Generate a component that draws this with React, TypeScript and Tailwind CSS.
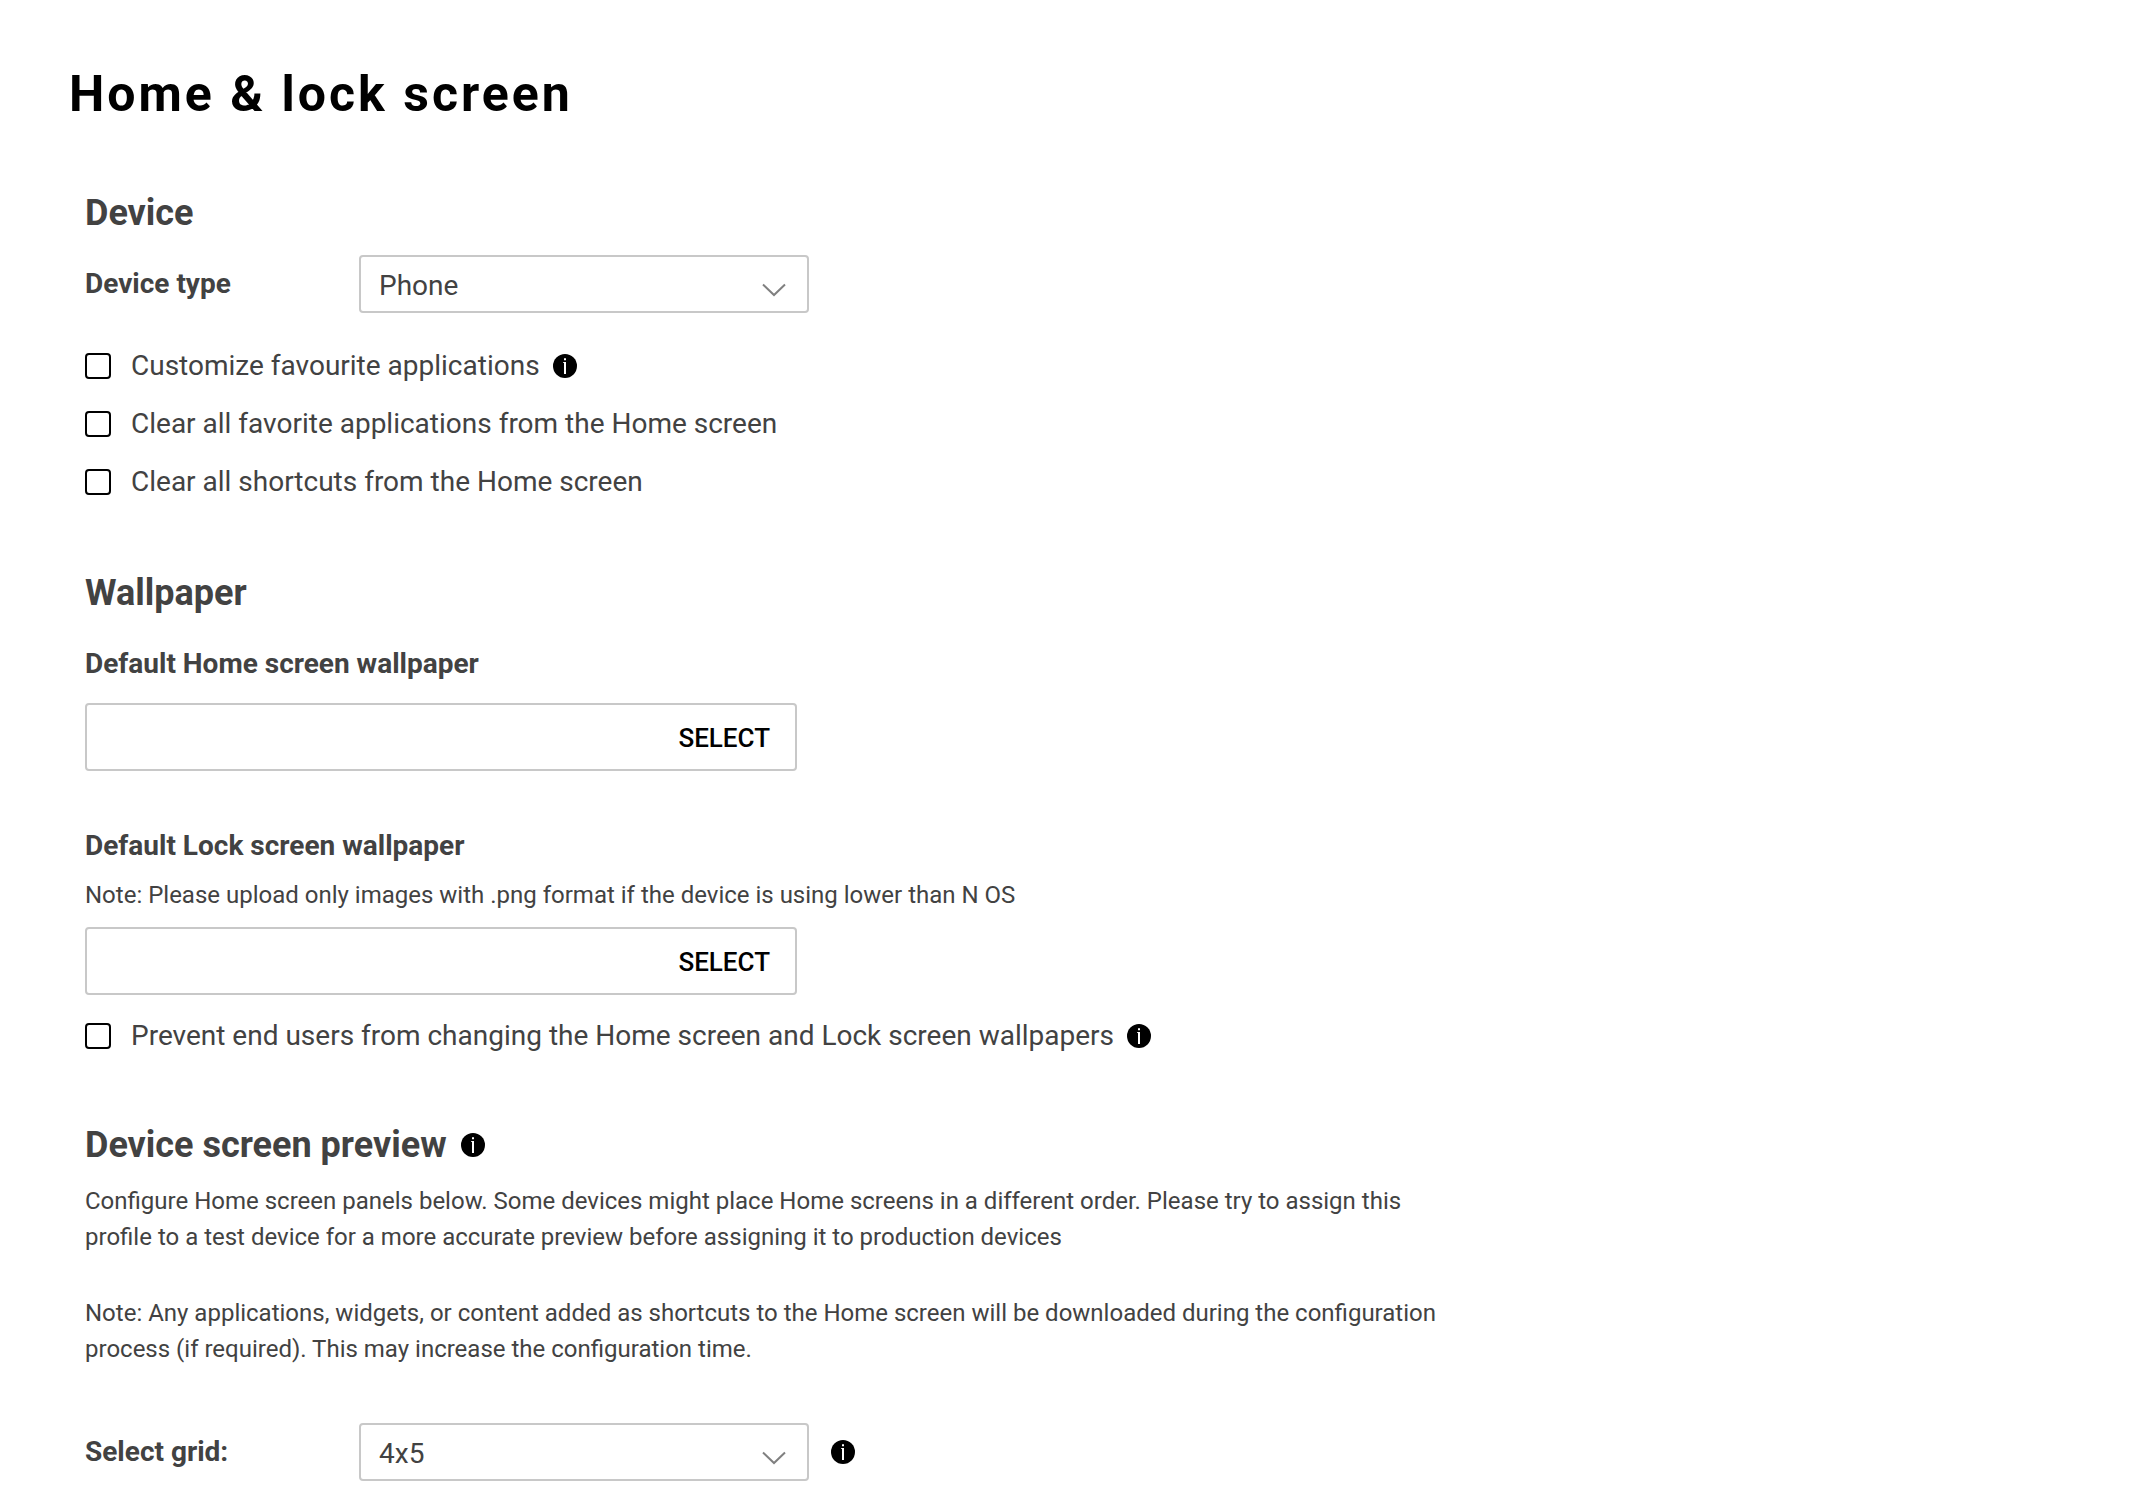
import { useId, type ReactNode } from "react";

function InfoIcon() {
  return (
    <button type="button" aria-label="More information" className="block size-6 shrink-0 rounded-full">
      <svg viewBox="0 0 24 24" className="block size-6" aria-hidden="true">
        <circle cx="12" cy="12" r="12" fill="#000" />
        <path fill="#fff" d="M11 4.2h2v2h-2zM10.2 8H13v12h-2V9h-.8z" />
      </svg>
    </button>
  );
}

function SectionHeading({ children }: { children: ReactNode }) {
  return <h2 className="text-[36px] leading-10 font-bold">{children}</h2>;
}

function SelectRow({ label, value, options, info }: { label: string; value: string; options: string[]; info?: boolean }) {
  const id = useId();
  return (
    <div className="flex items-center">
      <label htmlFor={id} className="w-[274px] shrink-0 text-[28px] leading-10 font-bold">
        {label}
      </label>
      <div className="relative w-[450px]">
        <select
          id={id}
          defaultValue={value}
          className="block h-[58px] w-full appearance-none rounded border-2 border-[#c8c8c8] bg-white pt-1 pr-14 pl-[18px] text-[28px] leading-10"
        >
          {options.map((o) => (
            <option key={o}>{o}</option>
          ))}
        </select>
        <svg
          viewBox="0 0 24 14"
          className="pointer-events-none absolute right-[23px] bottom-4 h-3.5 w-6"
          fill="none"
          stroke="#808080"
          strokeWidth="2"
          aria-hidden="true"
        >
          <path d="M1 1.5 12 12 23 1.5" />
        </svg>
      </div>
      {info && (
        <div className="ml-[22px]">
          <InfoIcon />
        </div>
      )}
    </div>
  );
}

function CheckRow({ label, info }: { label: string; info?: boolean }) {
  return (
    <div className="flex min-h-[58px] items-center gap-[13px]">
      <label className="flex items-center gap-5 text-[28px] leading-10">
        <input type="checkbox" className="size-[26px] shrink-0 appearance-none rounded border-2 border-black bg-white checked:bg-black" />
        {label}
      </label>
      {info && <InfoIcon />}
    </div>
  );
}

function FileField({ label, note }: { label: string; note?: string }) {
  const id = useId();
  return (
    <div>
      <label htmlFor={id} className="block text-[28px] leading-10 font-bold">
        {label}
      </label>
      {note && <p className="mt-[11px] -mb-[5px] text-[24px] leading-9">{note}</p>}
      <div className="mt-[19px] flex h-[68px] max-w-[712px] items-stretch rounded border-2 border-[#c8c8c8] bg-white">
        <input id={id} type="text" readOnly className="min-w-0 flex-1 bg-transparent px-4 text-[26px] outline-none" />
        <button type="button" className="px-[25px] pt-0.5 text-[26px] font-medium text-black">
          SELECT
        </button>
      </div>
    </div>
  );
}

export default function App() {
  return (
    <main className="min-h-screen bg-white px-[69px] pt-[62px] pb-[22px] font-['Roboto',sans-serif] text-[#424242]">
      <h1 className="text-[50px] leading-16 font-bold tracking-[3px] text-black">Home &amp; lock screen</h1>
      <div className="pt-[67px] pl-4">
        <section>
          <SectionHeading>Device</SectionHeading>
          <div className="mt-[22px]">
            <SelectRow label="Device type" value="Phone" options={["Phone", "Tablet"]} />
          </div>
          <div className="mt-6">
            <CheckRow label="Customize favourite applications" info />
            <CheckRow label="Clear all favorite applications from the Home screen" />
            <CheckRow label="Clear all shortcuts from the Home screen" />
          </div>
        </section>

        <section className="mt-[62px]">
          <SectionHeading>Wallpaper</SectionHeading>
          <div className="mt-[31px] flex flex-col gap-[55px]">
            <FileField label="Default Home screen wallpaper" />
            <FileField
              label="Default Lock screen wallpaper"
              note="Note: Please upload only images with .png format if the device is using lower than N OS"
            />
          </div>
          <div className="mt-3">
            <CheckRow label="Prevent end users from changing the Home screen and Lock screen wallpapers" info />
          </div>
        </section>

        <section className="mt-[60px]">
          <div className="flex items-center gap-3.5">
            <SectionHeading>Device screen preview</SectionHeading>
            <InfoIcon />
          </div>
          <div className="mt-[18px] flex max-w-[1364px] flex-col gap-10 text-[24px] leading-9">
            <p>
              Configure Home screen panels below. Some devices might place Home screens in a different order. Please try
              to assign this profile to a test device for a more accurate preview before assigning it to production
              devices
            </p>
            <p>
              Note: Any applications, widgets, or content added as shortcuts to the Home screen will be downloaded
              during the configuration process (if required). This may increase the configuration time.
            </p>
          </div>
          <div className="mt-14">
            <SelectRow label="Select grid:" value="4x5" options={["4x4", "4x5", "5x5"]} info />
          </div>
        </section>
      </div>
    </main>
  );
}
